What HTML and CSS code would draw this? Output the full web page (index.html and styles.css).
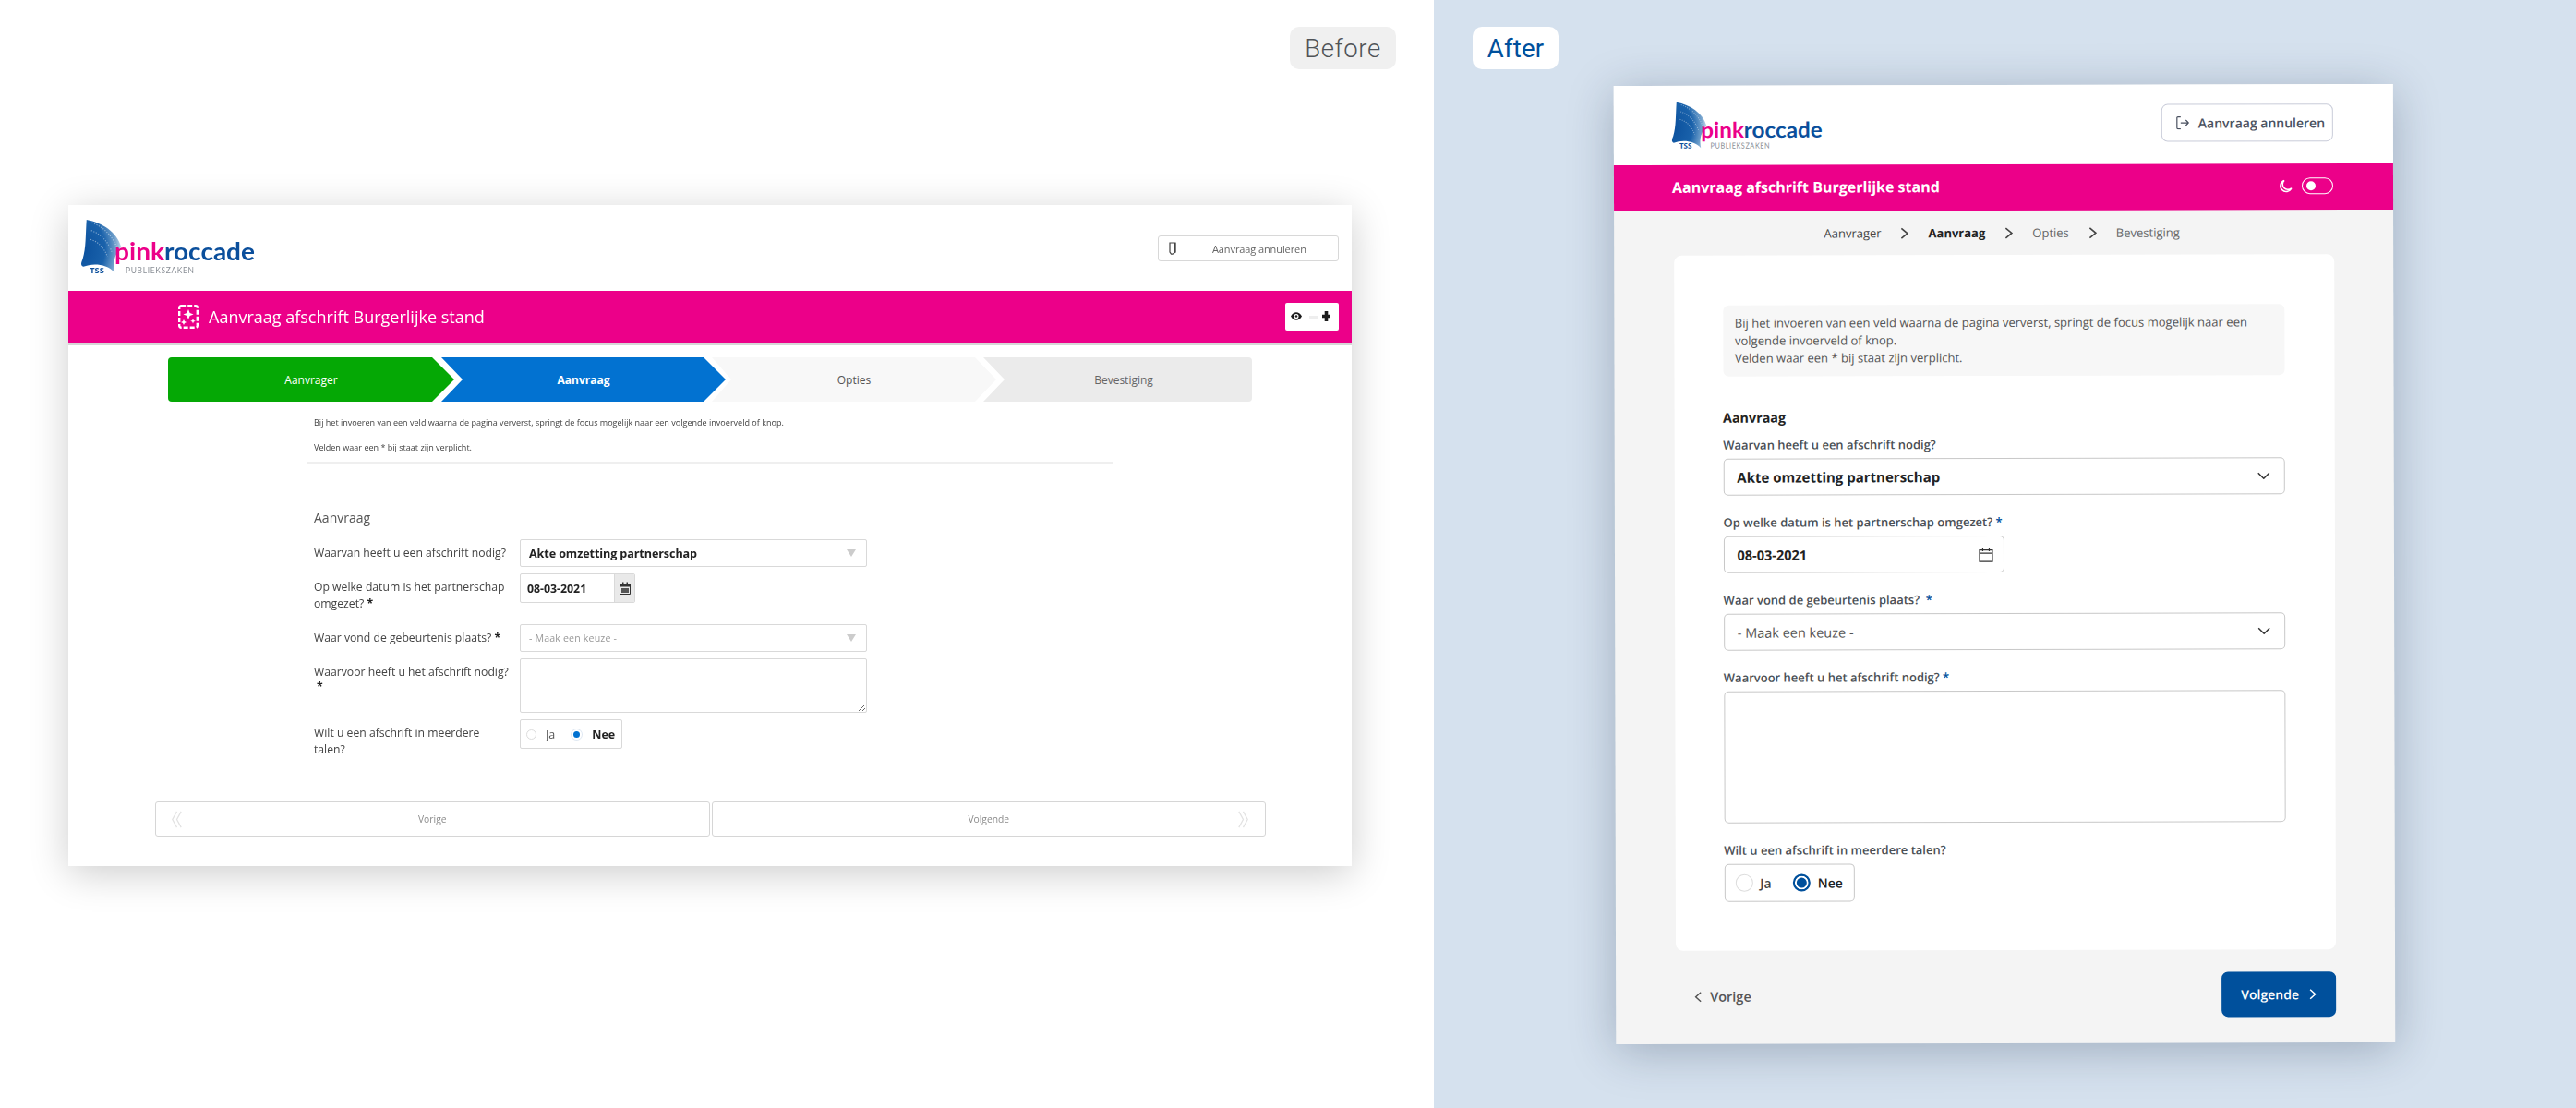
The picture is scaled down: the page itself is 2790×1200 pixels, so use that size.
FILE: index.html
```html
<!DOCTYPE html>
<html lang="nl">
<head>
<meta charset="utf-8">
<title>Aanvraag afschrift Burgerlijke stand</title>
<link rel="stylesheet" href="styles.css">
</head>
<body>
<div class="compare">
  <section class="panel panel-before">
    <span class="tag tag-before">Before</span>
    <div class="old-window">
      <header class="old-head">
        <svg class="logo old-logo" viewBox="0 0 489 153" aria-label="pinkroccade publiekszaken">
          <defs>
            <radialGradient id="sailA" cx=".02" cy=".55" r="1.05"><stop offset="0" stop-color="#0a4f9c"/><stop offset=".55" stop-color="#1a62ab"/><stop offset=".8" stop-color="#6f9fcb"/><stop offset="1" stop-color="#e3edf6"/></radialGradient>
          </defs>
          <path class="sail" fill="url(#sailA)" d="M15 0C60 8 100 35 112 75L100 95C92 110 90 125 94 148C70 122 30 122 6 132C-3 128 0 120 4 110C14 80 12 40 15 0Z"/>
          <path class="sail-dots" d="M30 8C62 20 88 44 100 78M28 30C55 40 75 60 86 90M26 55C48 62 64 78 74 104"/>
          <text class="logo-tss" x="24" y="150">TSS</text>
          <text class="logo-word" x="94" y="115" textLength="395" lengthAdjust="spacingAndGlyphs"><tspan class="pink">pink</tspan><tspan class="blue">roccade</tspan></text>
          <text class="logo-sub" x="125" y="150" textLength="194" lengthAdjust="spacingAndGlyphs">PUBLIEKSZAKEN</text>
        </svg>
        <a class="old-cancel">
          <svg class="old-door" viewBox="0 0 8 14"><path d="M1 1h6v10l-3 2.200H2.500L1 11z"/><path d="M6.600 1v11"/></svg>
          <span>Aanvraag annuleren</span>
        </a>
      </header>
      <div class="old-band">
        <svg class="old-crest" viewBox="0 0 22 26"><rect x="1.200" y="1.200" width="19.600" height="23.600" rx="2" fill="none" stroke="#fff" stroke-width="2.400" stroke-dasharray="5 2"/><path d="M11 5l1.600 4 4 1.500-4 1.600L11 16l-1.600-3.900-4-1.600 4-1.500zM6 16l1 2 2 1-2 1-1 2-1-2-2-1 2-1zM16 15l.8 2 2 .8-2 .8-.8 2-.8-2-2-.8 2-.8z" fill="#fff"/></svg>
        <h1 class="old-title">Aanvraag afschrift Burgerlijke stand</h1>
        <div class="old-tools">
          <svg class="old-eye" viewBox="0 0 14 10"><path d="M0 5C2 1.500 4.500 0 7 0s5 1.500 7 5c-2 3.500-4.500 5-7 5S2 8.500 0 5zm7-3a3 3 0 1 0 0 6 3 3 0 0 0 0-6z" fill="#1c1c1c"/><circle cx="7" cy="5" r="1.500" fill="#1c1c1c"/></svg>
          <span class="old-sep"></span>
          <svg class="old-plus" viewBox="0 0 10 12"><path d="M3 0h4v4h3v4H7v4H3V8H0V4h3z" fill="#1c1c1c"/></svg>
        </div>
      </div>
      <ol class="old-steps">
        <li class="old-step s-done">Aanvrager</li>
        <li class="old-step s-active">Aanvraag</li>
        <li class="old-step s-next">Opties</li>
        <li class="old-step s-last">Bevestiging</li>
      </ol>
      <div class="old-intro">
        <p>Bij het invoeren van een veld waarna de pagina ververst, springt de focus mogelijk naar een volgende invoerveld of knop.</p>
        <p>Velden waar een * bij staat zijn verplicht.</p>
      </div>
      <div class="old-form">
        <h2 class="old-legend">Aanvraag</h2>
        <div class="old-grid">
          <label class="old-label">Waarvan heeft u een afschrift nodig?</label>
          <div class="old-select strong">Akte omzetting partnerschap<i class="old-caret"></i></div>
          <label class="old-label">Op welke datum is het partnerschap omgezet? <b>*</b></label>
          <div class="old-date">
            <span class="old-date-value">08-03-2021</span>
            <span class="old-date-btn"><svg viewBox="0 0 12 14"><path d="M1 2h2V.5h1.500V2h3V.5H9V2h2a1 1 0 0 1 1 1v10a1 1 0 0 1-1 1H1a1 1 0 0 1-1-1V3a1 1 0 0 1 1-1zm0 3.500V13h10V5.500z" fill="#333"/><path d="M2 7h8v5H2z" fill="#555"/></svg></span>
          </div>
          <label class="old-label">Waar vond de gebeurtenis plaats? <b>*</b></label>
          <div class="old-select placeholder">- Maak een keuze -<i class="old-caret"></i></div>
          <label class="old-label">Waarvoor heeft u het afschrift nodig? <b class="star-line">*</b></label>
          <textarea class="old-text" aria-label="Waarvoor"></textarea>
          <label class="old-label">Wilt u een afschrift in meerdere talen?</label>
          <div class="old-radios">
            <i class="old-radio"></i><span class="old-opt">Ja</span>
            <i class="old-radio on"></i><span class="old-opt on">Nee</span>
          </div>
        </div>
      </div>
      <nav class="old-nav">
        <a class="old-nav-btn">
          <svg class="old-dbl left" viewBox="0 0 14 24"><path d="M7 1L1 12l6 11M13 1L7 12l6 11"/></svg>Vorige
        </a>
        <a class="old-nav-btn">
          Volgende<svg class="old-dbl right" viewBox="0 0 14 24"><path d="M7 1l6 11-6 11M1 1l6 11-6 11"/></svg>
        </a>
      </nav>
    </div>
  </section>

  <section class="panel panel-after">
    <span class="tag tag-after">After</span>
    <div class="new-window">
      <header class="new-head">
        <svg class="logo new-logo" viewBox="0 0 489 153" aria-label="pinkroccade publiekszaken">
          <path class="sail" fill="url(#sailA)" d="M15 0C60 8 100 35 112 75L100 95C92 110 90 125 94 148C70 122 30 122 6 132C-3 128 0 120 4 110C14 80 12 40 15 0Z"/>
          <path class="sail-dots" d="M30 8C62 20 88 44 100 78M28 30C55 40 75 60 86 90M26 55C48 62 64 78 74 104"/>
          <text class="logo-tss" x="24" y="150">TSS</text>
          <text class="logo-word" x="94" y="115" textLength="395" lengthAdjust="spacingAndGlyphs"><tspan class="pink">pink</tspan><tspan class="blue">roccade</tspan></text>
          <text class="logo-sub" x="125" y="150" textLength="194" lengthAdjust="spacingAndGlyphs">PUBLIEKSZAKEN</text>
        </svg>
        <a class="new-cancel">
          <svg viewBox="0 0 14 15"><path d="M5 1H2a1 1 0 0 0-1 1v11a1 1 0 0 0 1 1h3M5 7.500h8.500M10.500 4.500l3 3-3 3"/></svg>
          <span>Aanvraag annuleren</span>
        </a>
      </header>
      <div class="new-band">
        <h1 class="new-title">Aanvraag afschrift Burgerlijke stand</h1>
        <div class="new-tools">
          <svg class="moon" viewBox="0 0 15 15"><path d="M6 1.200A6.200 6.200 0 1 0 13.800 9.500 5.600 5.600 0 0 1 6 1.200z"/></svg>
          <span class="toggle"><i></i></span>
        </div>
      </div>
      <ol class="new-steps">
        <li>Aanvrager</li>
        <li class="chev"><svg viewBox="0 0 8 12"><path d="M1 1l6 5-6 5"/></svg></li>
        <li class="current">Aanvraag</li>
        <li class="chev"><svg viewBox="0 0 8 12"><path d="M1 1l6 5-6 5"/></svg></li>
        <li class="todo">Opties</li>
        <li class="chev"><svg viewBox="0 0 8 12"><path d="M1 1l6 5-6 5"/></svg></li>
        <li class="todo">Bevestiging</li>
      </ol>
      <main class="new-card">
        <div class="new-info">Bij het invoeren van een veld waarna de pagina ververst, springt de focus mogelijk naar een volgende invoerveld of knop.<br>Velden waar een * bij staat zijn verplicht.</div>
        <h2 class="new-legend">Aanvraag</h2>
        <div class="new-field first">
          <label class="new-label">Waarvan heeft u een afschrift nodig?</label>
          <div class="new-select strong">Akte omzetting partnerschap<svg viewBox="0 0 14 8"><path d="M1 1l6 6 6-6"/></svg></div>
        </div>
        <div class="new-field">
          <label class="new-label">Op welke datum is het partnerschap omgezet? <b>*</b></label>
          <div class="new-select new-date strong">08-03-2021<svg class="cal" viewBox="0 0 16 17"><path d="M1 3.500h14v12.500H1zM1 7h14M4.500 1v4M11.500 1v4"/></svg></div>
        </div>
        <div class="new-field">
          <label class="new-label">Waar vond de gebeurtenis plaats?&nbsp; <b>*</b></label>
          <div class="new-select placeholder">- Maak een keuze -<svg viewBox="0 0 14 8"><path d="M1 1l6 6 6-6"/></svg></div>
        </div>
        <div class="new-field">
          <label class="new-label">Waarvoor heeft u het afschrift nodig? <b>*</b></label>
          <textarea class="new-text" aria-label="Waarvoor"></textarea>
        </div>
        <div class="new-field">
          <label class="new-label">Wilt u een afschrift in meerdere talen?</label>
          <div class="new-radios">
            <i class="new-radio"></i><span class="new-opt">Ja</span>
            <i class="new-radio on"></i><span class="new-opt on">Nee</span>
          </div>
        </div>
      </main>
      <footer class="new-foot">
        <a class="new-prev"><svg viewBox="0 0 8 12"><path d="M7 1L1.500 6 7 11"/></svg>Vorige</a>
        <a class="new-next">Volgende<svg viewBox="0 0 8 12"><path d="M1 1l5.500 5L1 11"/></svg></a>
      </footer>
    </div>
  </section>
</div>
</body>
</html>
```
FILE: styles.css
```css
* { box-sizing: border-box; }
html, body { margin: 0; padding: 0; }
body { width: 2790px; height: 1200px; overflow: hidden; background: #fff; font-family: "Open Sans", "Liberation Sans", sans-serif; color: #333; }
p, h1, h2, ol { margin: 0; padding: 0; }
ol { list-style: none; }
i { display: block; font-style: normal; }
a { display: flex; align-items: center; }

.compare { display: grid; grid-template-columns: 1553px 1237px; height: 1200px; }
.panel { position: relative; height: 1200px; overflow: hidden; }
.panel-before { background: #fff; }
.panel-after { background: #d5e1ee; }

.tag { position: absolute; top: 29px; height: 46px; border-radius: 10px; display: flex; align-items: center; justify-content: center; font-family: Roboto, sans-serif; font-size: 27.500px; font-weight: 300; letter-spacing: .6px; }
.tag-before { left: 1397px; width: 115px; background: #f0f0f0; color: #4f5357; }
.tag-after { left: 42px; width: 93px; background: #fff; color: #00509c; font-weight: 400; letter-spacing: .2px; }

/* logo */
.logo { display: block; overflow: visible; }
.sail-dots { fill: none; stroke: #fff; stroke-width: 3; stroke-dasharray: 3 4; opacity: .45; }
.logo-word { font-family: Lato, sans-serif; font-weight: 700; font-size: 70px; }
.logo-word .pink { fill: #ec0089; }
.logo-word .blue { fill: #0b4f9c; }
.logo-tss { font-family: "Open Sans", sans-serif; font-weight: 700; font-size: 24px; fill: #0b4f9c; }
.logo-sub { font-family: Lato, sans-serif; font-size: 26px; letter-spacing: 2px; fill: #8a8f96; }

/* ---------- before window ---------- */
.old-window { position: absolute; left: 74px; top: 222px; width: 1390px; height: 716px; background: #fff; box-shadow: 0 8px 40px rgba(0,0,0,.2); filter: blur(.4px); }
.old-head { height: 93px; display: flex; justify-content: space-between; padding: 16px 14px 0 14px; }
.old-logo { width: 188px; height: 59px; }
.old-cancel { width: 196px; height: 28px; margin-top: 17px; border: 1px solid #d8d8d8; border-radius: 3px; padding: 0 0 0 11px; font-size: 11px; color: #666; letter-spacing: -.1px; }
.old-cancel span { margin-left: 39px; }
.old-door { width: 8px; height: 14px; fill: none; stroke: #444; stroke-width: 1.200; }
.old-band { height: 59px; padding: 0 14px 2px 119px; background: #ec0089; border-bottom: 2px solid #d6d6d6; display: flex; align-items: center; }
.old-crest { width: 22px; height: 26px; }
.old-title { margin-left: 11px; font-size: 18px; font-weight: 400; color: #fff; }
.old-tools { margin-left: auto; width: 58px; height: 30px; background: #fff; border-radius: 2px; display: flex; align-items: center; padding: 0 0 0 6px; }
.old-eye { width: 12px; height: 9px; }
.old-sep { width: 9px; height: 3px; margin: 2px 5px 0 8px; background: #eee; }
.old-plus { width: 9px; height: 11px; }
.old-steps { display: flex; margin: 13px 0 0 108px; height: 48px; }
.old-step { height: 48px; display: flex; align-items: center; justify-content: center; font-size: 12px; }
.s-done { width: 310px; background: #05a805; color: #fff; border-radius: 4px 0 0 4px; clip-path: polygon(0 0, calc(100% - 24px) 0, 100% 50%, calc(100% - 24px) 100%, 0 100%); }
.s-active { width: 308px; margin-left: -14px; background: #0272d1; color: #fff; font-weight: 700; clip-path: polygon(0 0, calc(100% - 24px) 0, 100% 50%, calc(100% - 24px) 100%, 0 100%, 23px 50%); }
.s-next { width: 308px; margin-left: -15px; background: #f8f8f8; color: #555; clip-path: polygon(0 0, calc(100% - 23px) 0, 100% 50%, calc(100% - 23px) 100%, 0 100%, 21px 50%); }
.s-last { width: 291px; margin-left: -14px; padding-left: 13px; background: #ebebeb; color: #666; border-radius: 0 4px 4px 0; clip-path: polygon(0 0, 100% 0, 100% 100%, 0 100%, 23px 50%); }
.old-intro { margin: 16px 0 0 258px; width: 873px; height: 51px; padding: 0 8px; border-bottom: 2px solid #efefef; font-size: 9.050px; line-height: 13px; color: #444; }
.old-intro p + p { margin-top: 13.500px; }
.old-form { margin-left: 266px; width: 600px; padding-top: 50px; }
.old-legend { font-size: 14px; font-weight: 400; line-height: 18px; color: #555; }
.old-grid { display: grid; grid-template-columns: 223px 376px; row-gap: 7px; margin-top: 14px; }
.old-label { font-size: 12.200px; line-height: 18px; padding: 6px 12px 6px 0; color: #444; }
.old-label b { color: #222; }
.star-line { display: block; margin-left: 3px; line-height: 14px; }
.old-select { height: 30px; border: 1px solid #d9d9d9; border-radius: 2px; display: flex; align-items: center; justify-content: space-between; padding: 0 11px 0 9px; font-size: 12.600px; color: #222; }
.old-select.strong { font-weight: 700; letter-spacing: -.1px; }
.old-select.placeholder { color: #999; font-size: 10.650px; letter-spacing: .15px; }
.old-caret { width: 0; height: 0; border-left: 5px solid transparent; border-right: 5px solid transparent; border-top: 8px solid #ccc; }
.old-date { display: flex; width: 125px; height: 32px; border: 1px solid #d9d9d9; border-radius: 2px; overflow: hidden; align-self: start; }
.old-date-value { width: 101px; padding-left: 7px; display: flex; align-items: center; font-weight: 700; font-size: 12.300px; color: #222; }
.old-date-btn { flex: 1; background: #e9e9e9; border-left: 1px solid #d9d9d9; display: flex; align-items: center; justify-content: center; }
.old-date-btn svg { width: 12px; height: 14px; }
.old-text { display: block; width: 376px; height: 59px; border: 1px solid #d9d9d9; border-radius: 2px; margin: 0; background: #fff; }
.old-radios { display: flex; align-items: center; width: 111px; height: 32px; border: 1px solid #d9d9d9; border-radius: 2px; padding-left: 6px; font-size: 12.500px; align-self: start; }
.old-radio { width: 11px; height: 11px; border-radius: 50%; border: 1px solid #ddd; }
.old-radio.on { background: #0272d1; border: 2px solid #fff; box-shadow: 0 0 0 1px #dfe8f2; }
.old-opt { margin: 0 18px 0 10px; color: #555; }
.old-opt.on { font-weight: 700; color: #222; margin: 0 0 0 11px; }
.old-nav { display: flex; gap: 2px; margin: 41px 0 0 94px; }
.old-nav-btn { position: relative; width: 600.500px; height: 38px; border: 1px solid #d6d6d6; border-radius: 3px; justify-content: center; font-size: 10.300px; color: #8c8c8c; }
.old-dbl { position: absolute; top: 9px; width: 11px; height: 19px; fill: none; stroke: #e2e2e2; stroke-width: 1.600; }
.old-dbl.left { left: 17px; }
.old-dbl.right { right: 18px; }

/* ---------- after window ---------- */
.new-window { position: absolute; left: 196px; top: 92px; width: 844px; height: 1038px; background: #f4f4f4; box-shadow: 0 8px 50px rgba(20,40,70,.28); transform: rotate(-.14deg); }
.new-head { height: 86px; background: #fff; display: flex; justify-content: space-between; padding: 18px 65px 0 63px; }
.new-logo { width: 163px; height: 51px; }
.new-cancel { width: 186px; height: 41px; margin-top: 3px; border: 1px solid #c9ccd9; border-radius: 7px; padding-left: 15px; font-size: 14px; font-weight: 600; color: #4a5160; }
.new-cancel svg { width: 14px; height: 15px; fill: none; stroke: #4a5160; stroke-width: 1.200; }
.new-cancel span { margin-left: 10px; }
.new-band { height: 50px; background: #ec0089; display: flex; align-items: center; justify-content: space-between; padding: 0 65px 2px 63px; }
.new-title { font-size: 16px; font-weight: 700; color: #fff; }
.new-tools { display: flex; align-items: center; gap: 10px; }
.moon { width: 15px; height: 15px; fill: none; stroke: #fff; stroke-width: 1.600; }
.toggle { display: flex; align-items: center; width: 34px; height: 18px; border: 1.500px solid #fff; border-radius: 9px; padding-left: 4px; }
.toggle i { width: 10px; height: 10px; border-radius: 50%; background: #fff; }
.new-steps { height: 48px; display: flex; align-items: center; justify-content: center; gap: 21px; padding: 0 4px 0 0; font-size: 13px; color: #444; }
.new-steps .current { font-weight: 700; color: #222; }
.new-steps .todo { color: #666; }
.chev { display: flex; }
.chev svg { width: 9px; height: 13px; fill: none; stroke: #444; stroke-width: 1.500; }
.new-card { width: 715px; height: 753px; margin-left: 64.500px; padding: 54px 54px 0 53px; background: #fff; border-radius: 8px; }
.new-info { height: 77px; padding: 10px 13px; background: #f7f7f7; border-radius: 6px; font-size: 13.050px; line-height: 19px; color: #555; }
.new-legend { margin-top: 35px; font-size: 14.300px; font-weight: 700; line-height: 20px; color: #222; }
.new-field { margin-top: 19px; }
.new-field.first { margin-top: 9px; }
.new-label { display: block; font-size: 13px; font-weight: 600; line-height: 20px; margin-bottom: 5px; color: #4a4f55; }
.new-label b { color: #00509c; font-weight: 600; }
.new-select { height: 40px; border: 1px solid #c8c8c8; border-radius: 5px; display: flex; align-items: center; justify-content: space-between; padding: 0 15px 0 14px; font-size: 15px; color: #222; }
.new-select svg { width: 14px; height: 8px; fill: none; stroke: #333; stroke-width: 1.500; }
.new-select.strong { font-weight: 700; }
.new-select.placeholder { color: #555; font-weight: 400; font-size: 14.500px; }
.new-date { width: 304px; padding-right: 11px; font-size: 14.500px; }
.new-select .cal { width: 16px; height: 17px; stroke-width: 1.200; }
.new-text { display: block; width: 608px; height: 143px; margin: 0; border: 1px solid #c8c8c8; border-radius: 5px; background: #fff; resize: none; }
.new-radios { display: flex; align-items: center; width: 141px; height: 41px; border: 1px solid #c8c8c8; border-radius: 5px; padding-left: 11px; font-size: 14px; font-weight: 600; }
.new-radio { width: 19px; height: 19px; border-radius: 50%; border: 1.500px solid #ddd; }
.new-radio.on { border: 2px solid #00509c; background: #00509c; box-shadow: inset 0 0 0 2px #fff; }
.new-opt { margin: 0 23px 0 8px; color: #444; }
.new-opt.on { margin: 0 0 0 8px; color: #222; }
.new-foot { display: flex; justify-content: space-between; align-items: flex-start; padding: 24px 64px 0 85px; }
.new-prev { height: 49px; gap: 9px; font-size: 14.500px; font-weight: 600; color: #555; padding-top: 2px; }
.new-prev svg { width: 8px; height: 12px; fill: none; stroke: #555; stroke-width: 1.500; }
.new-next { width: 124px; height: 49px; justify-content: center; gap: 11px; background: #00509c; border-radius: 7px; font-size: 14px; font-weight: 600; color: #fff; }
.new-next svg { width: 8px; height: 13px; fill: none; stroke: #fff; stroke-width: 1.500; }
```
